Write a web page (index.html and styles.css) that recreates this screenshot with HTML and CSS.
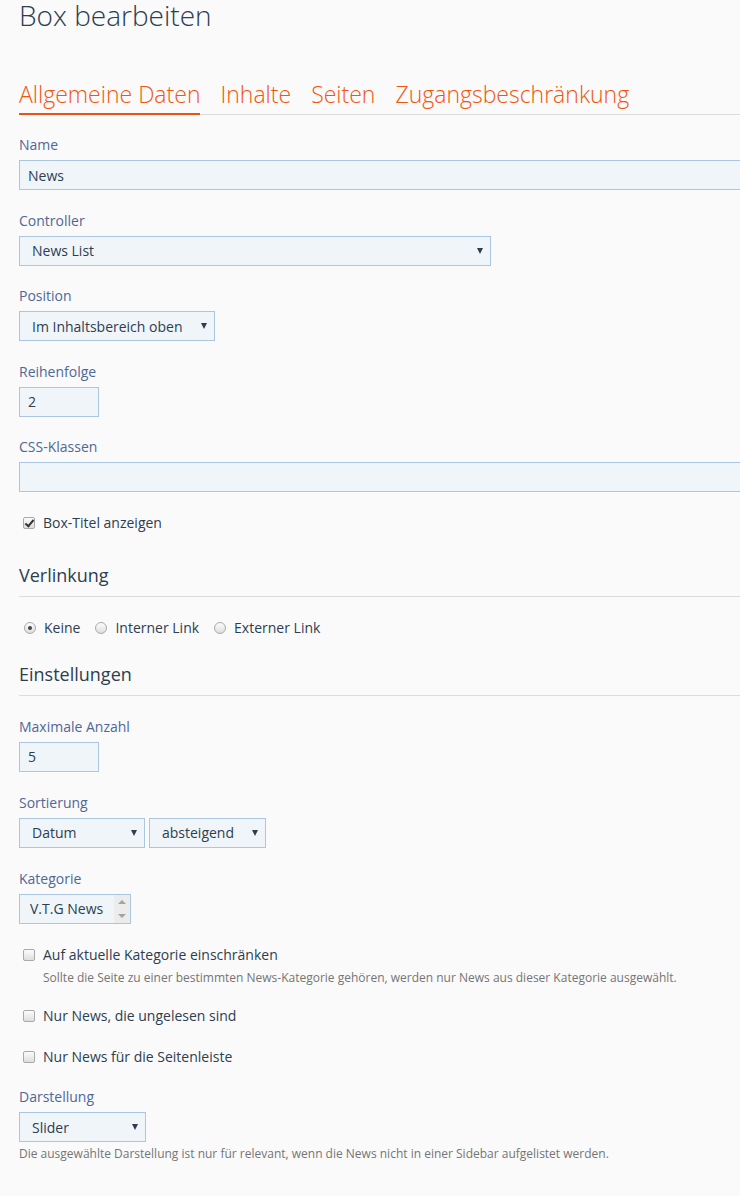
FILE: index.html
```html
<!DOCTYPE html>
<html lang="de">

<head>
  <meta charset="UTF-8">
  <meta name="viewport" content="width=device-width, initial-scale=1.0">
  <link rel="stylesheet" href="styles.css">
  <title>Box bearbeiten</title>
</head>

<body>

  <div class="page">
    <h1 class="page-title">Box bearbeiten</h1>

    <!-- Reiter -->
    <ul class="tabs">
      <li class="tab active">Allgemeine Daten</li>
      <li class="tab">Inhalte</li>
      <li class="tab">Seiten</li>
      <li class="tab">Zugangsbeschränkung</li>
    </ul>

    <form class="box-form">
      <div class="form-group">
        <label class="form-label">Name</label>
        <input type="text" class="form-input wide" value="News">
      </div>

      <div class="form-group">
        <label class="form-label">Controller</label>
        <span class="select controller"><select><option>News List</option></select></span>
      </div>

      <div class="form-group">
        <label class="form-label">Position</label>
        <span class="select position"><select><option>Im Inhaltsbereich oben</option></select></span>
      </div>

      <div class="form-group">
        <label class="form-label">Reihenfolge</label>
        <input type="text" class="form-input short" value="2">
      </div>

      <div class="form-group">
        <label class="form-label">CSS-Klassen</label>
        <input type="text" class="form-input wide" value="">
      </div>

      <div class="check-row">
        <label><input type="checkbox" checked> Box-Titel anzeigen</label>
      </div>

      <h2 class="section-title">Verlinkung</h2>
      <div class="radio-row">
        <label><input type="radio" name="link" checked> Keine</label>
        <label><input type="radio" name="link"> Interner Link</label>
        <label><input type="radio" name="link"> Externer Link</label>
      </div>

      <h2 class="section-title">Einstellungen</h2>

      <div class="form-group">
        <label class="form-label">Maximale Anzahl</label>
        <input type="text" class="form-input short" value="5">
      </div>

      <div class="form-group">
        <label class="form-label">Sortierung</label>
        <div class="inline-selects">
          <span class="select sort-field"><select><option>Datum</option></select></span>
          <span class="select sort-order"><select><option>absteigend</option></select></span>
        </div>
      </div>

      <div class="form-group">
        <label class="form-label">Kategorie</label>
        <div class="listbox">
          <span class="listbox-item">V.T.G News</span>
          <span class="listbox-scroll">
            <span class="arrow-up"></span>
            <span class="arrow-down"></span>
          </span>
        </div>
      </div>

      <div class="check-row">
        <label><input type="checkbox"> Auf aktuelle Kategorie einschränken</label>
        <p class="help-text indent">Sollte die Seite zu einer bestimmten News-Kategorie gehören, werden nur News aus dieser Kategorie ausgewählt.</p>
      </div>

      <div class="check-row">
        <label><input type="checkbox"> Nur News, die ungelesen sind</label>
      </div>

      <div class="check-row">
        <label><input type="checkbox"> Nur News für die Seitenleiste</label>
      </div>

      <div class="form-group">
        <label class="form-label">Darstellung</label>
        <span class="select display"><select><option>Slider</option></select></span>
        <p class="help-text">Die ausgewählte Darstellung ist nur für relevant, wenn die News nicht in einer Sidebar aufgelistet werden.</p>
      </div>
    </form>
  </div>

</body>

</html>
```

FILE: styles.css
```css
html, body {
  overflow: hidden;
}

body {
  margin: 0;
  background-color: #fafafa;
  font-family: "Open Sans", "Liberation Sans", sans-serif;
  font-size: 14px;
  color: #2c3e50;
}

.page {
  width: 780px;
  padding: 0 19px;
}

.page-title {
  font-weight: 300;
  font-size: 28px;
  line-height: 30px;
  margin: 0;
  color: #2c3e50;
}

/* Reiter */
.tabs {
  list-style: none;
  display: flex;
  gap: 20px;
  margin: 48px 0 0 0;
  padding: 0;
  border-bottom: 1px solid #dcdcdc;
}

.tab {
  font-weight: 300;
  font-size: 23px;
  line-height: 32px;
  color: #f0560f;
  padding-bottom: 3px;
  margin-bottom: -1px;
  border-bottom: 2px solid transparent;
}

.tab.active {
  border-bottom-color: #e95412;
}

.box-form {
  padding-top: 20px;
}

.form-group {
  margin-bottom: 20.5px;
}

.section-title ~ .form-group {
  margin-bottom: 21px;
}

.form-label {
  display: block;
  color: #4f6898;
  line-height: 20px;
  margin-bottom: 5px;
}

.form-input,
.select select {
  box-sizing: border-box;
  height: 30px;
  border: 1px solid #aac6e0;
  background-color: #f0f5fa;
  font-family: inherit;
  font-size: 14px;
  color: #2c3e50;
  padding: 0 8px;
  margin: 0;
  outline: none;
}

.form-input.wide {
  width: 780px;
}

.form-input.short {
  width: 80px;
}

/* Auswahlfelder mit eigenem Pfeil */
.select {
  position: relative;
  display: inline-block;
  vertical-align: top;
}

.select select {
  -webkit-appearance: none;
  appearance: none;
  width: 100%;
  padding: 0 24px 0 12px;
}

.select::after {
  content: "";
  position: absolute;
  right: 8px;
  top: 12px;
  border-left: 3px solid transparent;
  border-right: 3px solid transparent;
  border-top: 6px solid #2c3e50;
  pointer-events: none;
}

.select.controller { width: 472px; }
.select.position { width: 196px; }
.select.sort-field { width: 126px; }
.select.sort-order { width: 117px; }
.select.display { width: 127px; }

.inline-selects {
  display: flex;
  gap: 4px;
}

/* Kategorie-Liste */
.listbox {
  box-sizing: border-box;
  display: flex;
  width: 112px;
  height: 30px;
  border: 1px solid #aac6e0;
  background-color: #f0f5fa;
}

.listbox-item {
  flex: 1;
  padding-left: 10px;
  line-height: 28px;
}

.listbox-scroll {
  width: 16px;
  background-color: #ececec;
  display: flex;
  flex-direction: column;
  align-items: center;
  justify-content: space-between;
  padding: 5px 0;
}

.arrow-up {
  border-left: 4px solid transparent;
  border-right: 4px solid transparent;
  border-bottom: 4px solid #a3a3a3;
}

.arrow-down {
  border-left: 4px solid transparent;
  border-right: 4px solid transparent;
  border-top: 4px solid #a3a3a3;
}

/* Checkboxen und Radios */
.check-row {
  margin-bottom: 20.5px;
  padding-left: 3px;
}

.check-row label,
.radio-row label {
  display: inline-flex;
  align-items: center;
  line-height: 20px;
}

input[type="checkbox"],
input[type="radio"] {
  -webkit-appearance: none;
  appearance: none;
  width: 12px;
  height: 12px;
  margin: 0 8px 0 1px;
  border: 1px solid #a9a9a9;
  background: linear-gradient(#fcfcfc, #dedede);
  position: relative;
}

input[type="checkbox"] {
  border-radius: 2px;
}

input[type="checkbox"]:checked::after {
  content: "";
  position: absolute;
  left: 3px;
  top: 0px;
  width: 3px;
  height: 7px;
  border: solid #333;
  border-width: 0 2px 2px 0;
  transform: rotate(40deg);
}

input[type="radio"] {
  border-radius: 50%;
}

input[type="radio"]:checked::after {
  content: "";
  position: absolute;
  left: 3px;
  top: 3px;
  width: 4px;
  height: 4px;
  border-radius: 50%;
  background-color: #444;
}

.radio-row {
  display: flex;
  gap: 14px;
  padding-left: 4px;
}

.section-title {
  font-weight: 400;
  font-size: 18px;
  line-height: 24px;
  margin: 24px 0 21px 0;
  padding-bottom: 9px;
  border-bottom: 1px solid #dcdcdc;
}

.check-row + .section-title {
  margin-top: 30px;
}

.help-text {
  font-size: 12px;
  color: #757575;
  margin: 3px 0 0 0;
  line-height: 17px;
}

.help-text.indent {
  padding-left: 21px;
  margin-top: 4px;
}
```
